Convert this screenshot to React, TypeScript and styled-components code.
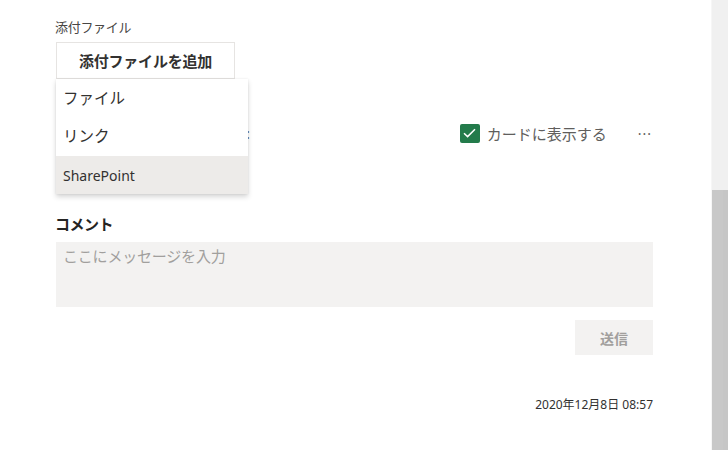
import React from "react";
import styled, { createGlobalStyle } from "styled-components";

const Global = createGlobalStyle`
  html, body { margin: 0; padding: 0; background: #ffffff; }
  body {
    font-family: "Segoe UI", "Noto Sans", "Noto Sans CJK JP", sans-serif;
    color: #323130;
  }
  * { box-sizing: border-box; }
`;

const Page = styled.div`
  display: flex;
  width: 728px;
  height: 450px;
  overflow: hidden;
`;

const Main = styled.main`
  flex: 1;
  padding: 18px 0 0 55px;
  display: flex;
  flex-direction: column;
`;

const Column = styled.div`
  width: 598px;
  display: flex;
  flex-direction: column;
`;

const FieldLabel = styled.div`
  font-family: "Noto Sans CJK JP", sans-serif;
  font-size: 13px;
  line-height: 18px;
  color: #484644;
  letter-spacing: -0.3px;
`;

const AttachArea = styled.div`
  position: relative;
  margin-top: 6px;
  align-self: flex-start;
  margin-left: 1px;
`;

const AddButton = styled.button`
  width: 179px;
  height: 37px;
  border: 1px solid #e6e4e2;
  background: #ffffff;
  font-family: "Noto Sans CJK JP", sans-serif;
  font-size: 15px;
  font-weight: 700;
  color: #323130;
  padding: 0;
  letter-spacing: -0.2px;
`;

const Menu = styled.div`
  position: absolute;
  top: 37px;
  left: 0;
  width: 192px;
  background: #ffffff;
  box-shadow: 0 3px 5px rgba(0, 0, 0, 0.16), 0 0 2px rgba(0, 0, 0, 0.08);
  z-index: 5;
  display: flex;
  flex-direction: column;
`;

const MenuItem = styled.div<{ $active?: boolean; $latin?: boolean }>`
  height: ${(p) => (p.$active ? 38 : 38.5)}px;
  display: flex;
  align-items: center;
  padding-left: 7px;
  padding-bottom: ${(p) => (p.$active ? 0 : 3)}px;
  background: ${(p) => (p.$active ? "#edebe9" : "#ffffff")};
  font-family: ${(p) =>
    p.$latin ? `"Segoe UI", "Noto Sans", sans-serif` : `"Noto Sans CJK JP", sans-serif`};
  font-size: ${(p) => (p.$latin ? 14 : 15.5)}px;
  color: #323130;
`;

const OptionRow = styled.div`
  margin-top: 37px;
  height: 34px;
  display: flex;
  align-items: center;
`;

const HiddenLabel = styled.span`
  width: 195px;
  text-align: right;
  font-family: "Noto Sans CJK JP", sans-serif;
  font-size: 14px;
  color: #605e5c;
  white-space: nowrap;
`;

const CheckGroup = styled.label`
  margin-left: auto;
  display: flex;
  align-items: center;
  gap: 7px;
  font-family: "Noto Sans CJK JP", sans-serif;
  font-size: 15px;
  color: #605e5c;
`;

const CheckBox = styled.span`
  width: 20px;
  height: 19px;
  border-radius: 2px;
  background: #237b4b;
  display: flex;
  align-items: center;
  justify-content: center;
`;

const More = styled.span`
  margin-left: 31px;
  margin-right: 1px;
  font-size: 14px;
  color: #605e5c;
  letter-spacing: 1px;
`;

const SectionTitle = styled.div`
  margin-top: 64px;
  font-family: "Noto Sans CJK JP", sans-serif;
  font-size: 15px;
  font-weight: 700;
  line-height: 20px;
  color: #252423;
  letter-spacing: -0.5px;
`;

const Comment = styled.div`
  margin-top: 8px;
  margin-left: 1px;
  height: 65px;
  background: #f3f2f1;
  padding: 4px 7px;
  font-family: "Noto Sans CJK JP", sans-serif;
  font-size: 15px;
  line-height: 20px;
  color: #a19f9d;
  letter-spacing: -0.2px;
`;

const SendRow = styled.div`
  margin-top: 13px;
  display: flex;
  justify-content: flex-end;
`;

const SendButton = styled.button`
  width: 78px;
  height: 35px;
  border: none;
  background: #f3f2f1;
  font-family: "Noto Sans CJK JP", sans-serif;
  font-size: 14px;
  font-weight: 700;
  color: #a19f9d;
  padding: 0;
`;

const Timestamp = styled.div`
  margin-top: 42px;
  text-align: right;
  font-family: "Segoe UI", "Noto Sans", "Noto Sans CJK JP", sans-serif;
  font-size: 12px;
  line-height: 16px;
  color: #323130;
`;

const Scrollbar = styled.div`
  width: 17px;
  display: flex;
  flex-direction: column;
  background: #f0f0f0;
  border-left: 1px solid #f6f6f6;
`;

const ScrollTrack = styled.div`
  height: 190px;
`;

const ScrollThumb = styled.div`
  flex: 1;
  background: #c8c8c8;
  border-right: 5px solid #c6c6c6;
`;

export default function App() {
  return (
    <>
      <Global />
      <Page>
        <Main>
          <Column>
            <FieldLabel>添付ファイル</FieldLabel>
            <AttachArea>
              <AddButton>添付ファイルを追加</AddButton>
              <Menu>
                <MenuItem>ファイル</MenuItem>
                <MenuItem>リンク</MenuItem>
                <MenuItem $active $latin>
                  SharePoint
                </MenuItem>
              </Menu>
            </AttachArea>
            <OptionRow>
              <HiddenLabel>ファイル名:</HiddenLabel>
              <CheckGroup>
                <CheckBox>
                  <svg width="13" height="10" viewBox="0 0 13 10">
                    <path d="M1 5.2 L4.6 8.6 L12 1.2" fill="none" stroke="#ffffff" strokeWidth="1.5" />
                  </svg>
                </CheckBox>
                カードに表示する
              </CheckGroup>
              <More>···</More>
            </OptionRow>
            <SectionTitle>コメント</SectionTitle>
            <Comment>ここにメッセージを入力</Comment>
            <SendRow>
              <SendButton>送信</SendButton>
            </SendRow>
            <Timestamp>2020年12月8日 08:57</Timestamp>
          </Column>
        </Main>
        <Scrollbar>
          <ScrollTrack />
          <ScrollThumb />
        </Scrollbar>
      </Page>
    </>
  );
}
